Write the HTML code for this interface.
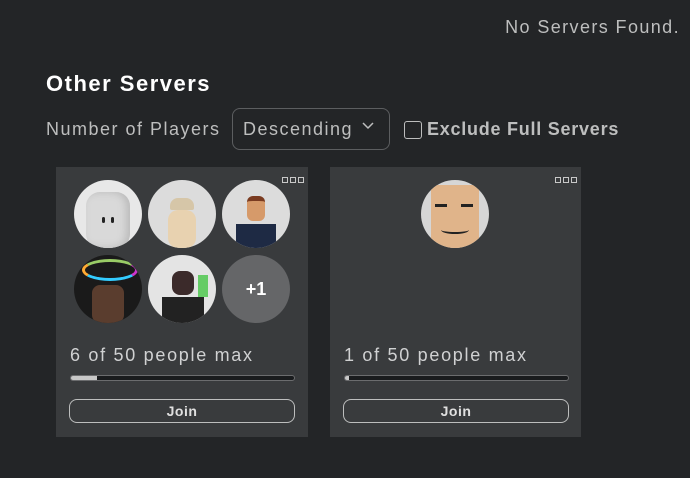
<!DOCTYPE html>
<html><head><meta charset="utf-8"><style>
body{margin:0;width:690px;height:478px;background:#232527;font-family:"Liberation Sans",sans-serif;color:#bdbebe;position:relative;overflow:hidden}
.a{position:absolute}
.card{position:absolute;top:167px;width:252px;height:270px;background:#393b3d}
.dots{position:absolute;top:10px;right:4px;display:flex;gap:2px}
.dots i{width:6px;height:6px;border:1.5px solid #c8c8c8;box-sizing:border-box;display:block;background:#393b3d}
.av{position:absolute;width:68px;height:68px;border-radius:50%;background:#d6d6d6;overflow:hidden}
.cnt{position:absolute;left:14px;top:178px;font-size:18px;color:#d0d1d2;letter-spacing:1.7px}
.bar{position:absolute;left:14px;top:208px;width:225px;height:6px;border:1px solid #6b6c6e;border-radius:3px;background:#191b1d;overflow:hidden;box-sizing:border-box}
.bar b{display:block;height:100%;background:#c8c8c8}
.join{position:absolute;left:13px;top:232px;width:224px;height:22px;border:1px solid #bdbebe;border-radius:8px;text-align:center;line-height:22px;font-size:14px;font-weight:bold;color:#e0e0e0;letter-spacing:0.5px}
</style></head><body>
<div class="a" style="right:10px;top:17px;font-size:18px;color:#bdbebe;letter-spacing:1.4px">No Servers Found.</div>
<div class="a" style="left:46px;top:71px;font-size:22px;font-weight:bold;color:#fff;letter-spacing:1.5px">Other Servers</div>
<div class="a" style="left:46px;top:119px;font-size:18px;color:#bdbebe;letter-spacing:1.5px">Number of Players</div>
<div class="a" style="left:232px;top:108px;width:158px;height:42px;border:1px solid #5c5e60;border-radius:8px;box-sizing:border-box;font-size:18px;line-height:40px;padding-left:10px;color:#bdbebe;letter-spacing:1.5px">Descending</div>
<svg class="a" style="left:362px;top:122px" width="12" height="8"><path d="M1 1 L6 6 L11 1" stroke="#bdbebe" stroke-width="1.5" fill="none"/></svg>
<div class="a" style="left:404px;top:121px;width:18px;height:18px;border:1px solid #bdbebe;border-radius:3px;box-sizing:border-box"></div>
<div class="a" style="left:427px;top:119px;font-size:18px;font-weight:bold;color:#bdbebe;letter-spacing:0.75px">Exclude Full Servers</div>

<div class="card" style="left:56px">
<div class="dots"><i></i><i></i><i></i></div>
<div class="av" style="left:18px;top:13px;background:#e8e8e8"><div class="a" style="left:12px;top:12px;width:44px;height:56px;border-radius:14px;background:#d9d9d9;box-shadow:inset -4px 0 8px #bbb"></div><div class="a" style="left:28px;top:37px;width:3px;height:6px;background:#222;border-radius:2px"></div><div class="a" style="left:37px;top:37px;width:3px;height:6px;background:#222;border-radius:2px"></div></div>
<div class="av" style="left:92px;top:13px;background:#dcdcdc"><div class="a" style="left:22px;top:18px;width:24px;height:12px;background:#d6c6a8;border-radius:8px 8px 2px 2px"></div><div class="a" style="left:20px;top:30px;width:28px;height:38px;background:#e8d2b0;border-radius:10px"></div></div>
<div class="av" style="left:166px;top:13px;background:#dcdcdc"><div class="a" style="left:25px;top:16px;width:18px;height:20px;background:#d69a6a;border-radius:6px;border-top:5px solid #7a3b20"></div><div class="a" style="left:14px;top:44px;width:40px;height:24px;background:#1e2a44"></div></div>
<div class="av" style="left:18px;top:88px;background:#1a1a1a"><div class="a" style="left:8px;top:4px;width:50px;height:16px;border:3px solid #c0c;border-radius:50%;border-color:#9c6 #c3c #3cf #fa3"></div><div class="a" style="left:18px;top:30px;width:32px;height:38px;background:#5a3d2e;border-radius:8px"></div></div>
<div class="av" style="left:92px;top:88px;background:#e4e4e4"><div class="a" style="left:24px;top:16px;width:22px;height:24px;background:#3b2a2a;border-radius:8px"></div><div class="a" style="left:14px;top:42px;width:42px;height:26px;background:#222"></div><div class="a" style="left:50px;top:20px;width:10px;height:22px;background:#6c6"></div></div>
<div class="av" style="left:166px;top:88px;background:#656668;color:#fff;font-weight:bold;font-size:18px;text-align:center;line-height:68px">+1</div>
<div class="cnt">6 of 50 people max</div>
<div class="bar"><b style="width:26px"></b></div>
<div class="join">Join</div>
</div>

<div class="card" style="left:330px;width:251px">
<div class="dots"><i></i><i></i><i></i></div>
<div class="av" style="left:91px;top:13px;background:#d6d6d6"><div class="a" style="left:10px;top:5px;width:48px;height:63px;background:#e0b48a"></div><div class="a" style="left:14px;top:24px;width:12px;height:3px;background:#222"></div><div class="a" style="left:40px;top:24px;width:12px;height:3px;background:#222"></div><div class="a" style="left:20px;top:46px;width:28px;height:6px;border-bottom:2px solid #222;border-radius:0 0 50% 50%"></div></div>
<div class="cnt">1 of 50 people max</div>
<div class="bar"><b style="width:4px"></b></div>
<div class="join">Join</div>
</div>
</body></html>
